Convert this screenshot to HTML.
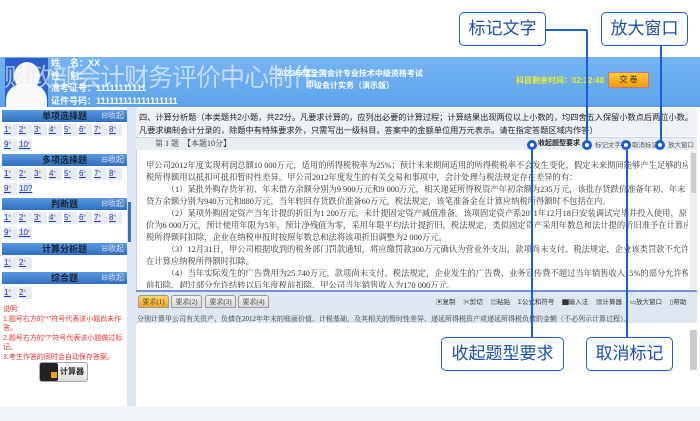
<!DOCTYPE html>
<html><head><meta charset="utf-8"><style>
*{margin:0;padding:0;box-sizing:border-box}
body{width:700px;height:421px;background:#fff;position:relative;overflow:hidden;font-family:"Liberation Sans","Noto Sans CJK SC",sans-serif;}
.a{position:absolute}
.sec{position:absolute;left:2px;width:125px;height:12px;background:linear-gradient(#5c9ae0,#2d6fc0);color:#123;font-size:9px;font-weight:bold;text-align:center;line-height:12px}
.sec span{position:absolute;right:3px;top:0;font-weight:normal;font-size:8px;color:#dde}
.nums{position:absolute;left:4px;font-size:8px;color:#2233bb;width:125px}
.nums b{display:inline-block;width:13px;height:12px;margin-right:2px;background:#e4ecf6;text-decoration:underline;font-weight:normal;line-height:12px}
.nums i{color:#e33;font-style:normal;font-size:6px;vertical-align:top}
.txt{font-family:"Liberation Serif","Noto Serif CJK SC",serif;font-size:8.3px;color:#333;white-space:nowrap;line-height:12px;overflow:hidden}
.call{position:absolute;border:1.5px solid #1a5fd0;border-radius:5px;background:#fff;color:#1a4fb0;font-size:17px;text-align:center;line-height:31px}
.ln{position:absolute;background:#1a5fd0}
.dot{position:absolute;width:10px;height:10px;border:3px solid #1a5fd0;border-radius:50%;background:#fff}
.tab{position:absolute;top:295px;width:31px;height:13px;border:1px solid #999;border-radius:3px 3px 0 0;background:linear-gradient(#f4f4f4,#d8d8d8);font-size:7px;text-align:center;line-height:12px;color:#333;font-family:"Liberation Serif","Noto Serif CJK SC",serif}
</style></head><body>
<div class="a" style="left:0;top:57px;width:700px;height:50px;background:linear-gradient(#75b4f4,#5ea3ea)"></div>
<div class="a" style="left:5px;top:58px;width:43px;height:49px;background:#2a5fd0"></div>
<div class="a" style="left:14px;top:62px;width:26px;height:28px;border-radius:50%;background:#f2f2f2"></div>
<div class="a" style="left:6px;top:84px;width:41px;height:23px;border-radius:16px 16px 0 0;background:#fafafa"></div>
<div class="a" style="left:51px;top:57px;font-size:9px;color:#fff;font-weight:bold;line-height:12.5px;white-space:nowrap">姓&nbsp;&nbsp;&nbsp;&nbsp;名：XX<br>性&nbsp;&nbsp;&nbsp;&nbsp;别：<br>准考证号：11111111111<br>证件号码：111111111111111111</div>
<div class="a" style="left:4px;top:58px;font-size:25px;color:rgba(255,255,255,.6);letter-spacing:-1px;white-space:nowrap">财政部会计财务评价中心制作</div>
<div class="a" style="left:260px;top:68px;width:180px;text-align:center;font-size:8px;color:#fff;font-weight:bold;line-height:12px;white-space:nowrap">2022年度全国会计专业技术中级资格考试<br>中级会计实务（演示版）</div>
<div class="a" style="left:516px;top:75px;font-size:8px;color:#f0f020;font-weight:bold">科目剩余时间：02:32:48</div>
<div class="a" style="left:608px;top:72px;width:41px;height:16px;background:linear-gradient(#ffcc33,#f09a10);border:1px solid #c77;font-size:8px;text-align:center;line-height:14px;color:#222">交 卷</div>
<div class="a" style="left:0;top:107px;width:135px;height:300px;background:#fff"></div>
<div class="a" style="left:127px;top:107px;width:9px;height:300px;background:#dde6f2"></div>
<div class="a" style="left:128px;top:202px;width:3px;height:40px;background:#3a6cc0"></div>
<div class="sec" style="top:110px">单项选择题<span>⊟收起</span></div>
<div class="nums" style="top:124px"><b>1<i>*</i></b><b>2<i>*</i></b><b>3<i>*</i></b><b>4<i>*</i></b><b>5<i>*</i></b><b>6<i>*</i></b><b>7<i>*</i></b><b>8<i>*</i></b><br><b style="margin-top:3px">9<i>*</i></b><b>10<i>*</i></b></div>
<div class="sec" style="top:154px">多项选择题<span>⊟收起</span></div>
<div class="nums" style="top:168px"><b>1<i>*</i></b><b>2<i>*</i></b><b>3<i>*</i></b><b>4<i>*</i></b><b>5<i>*</i></b><b>6<i>*</i></b><b>7<i>*</i></b><b>8<i>*</i></b><br><b style="margin-top:3px">9<i>*</i></b><b>10?</b></div>
<div class="sec" style="top:198px">判断题<span>⊟收起</span></div>
<div class="nums" style="top:212px"><b>1<i>*</i></b><b>2<i>*</i></b><b>3<i>*</i></b><b>4<i>*</i></b><b>5<i>*</i></b><b>6<i>*</i></b><b>7<i>*</i></b><b>8<i>*</i></b><br><b style="margin-top:3px">9<i>*</i></b><b>10<i>*</i></b></div>
<div class="sec" style="top:243px">计算分析题<span>⊟收起</span></div>
<div class="nums" style="top:257px"><b>1<i>*</i></b><b>2<i>*</i></b></div>
<div class="sec" style="top:272px">综合题<span>⊟收起</span></div>
<div class="nums" style="top:287px"><b>1<i>*</i></b><b>2<i>*</i></b></div>
<div class="a" style="left:3px;top:305px;width:122px;font-size:7px;color:#e33;line-height:9.5px">说明:<br>1.题号右方的“*”符号代表该小题尚未作答。<br>2.题号右方的“?”符号代表该小题做过标记。<br>3.考生作答的同时会自动保存答案。</div>
<div class="a" style="left:39px;top:362px;width:49px;height:20px;border:1px solid #aaa;border-radius:3px;background:linear-gradient(#fff,#ddd)"></div>
<div class="a" style="left:40px;top:363px;width:18px;height:18px;background:#222;border-radius:2px"></div>
<div class="a" style="left:51px;top:372px;width:6px;height:6px;background:#f0a020"></div>
<div class="a" style="left:60px;top:366px;font-size:8px;font-weight:bold;color:#222">计算器</div>
<div class="a" style="left:136px;top:107px;width:561px;height:300px;background:#fff;border-left:1px solid #ccd"></div>
<div class="a" style="left:136px;top:108px;width:561px;height:28px;background:#eef1f6"></div>
<div class="a" style="left:139px;top:111px;font-size:8.2px;color:#222;line-height:13px;width:556px">四、计算分析题（本类题共2小题，共22分。凡要求计算的，应列出必要的计算过程；计算结果出现两位以上小数的，均四舍五入保留小数点后两位小数。凡要求编制会计分录的，除题中有特殊要求外，只需写出一级科目。答案中的金额单位用万元表示。请在指定答题区域内作答）</div>
<div class="a" style="left:136px;top:137px;width:561px;height:13px;background:#e8edf4;border-top:1px solid #d0d8e4"></div>
<div class="a txt" style="left:155px;top:138px;font-size:8px">第 1 题　【本题10分】</div>
<div class="a" style="left:538px;top:138px;font-size:7px;color:#222;font-weight:bold">收起题型要求</div>
<div class="a" style="left:595px;top:139px;font-size:6.5px;color:#555">标记文字</div>
<div class="a" style="left:632px;top:139px;font-size:6.5px;color:#555">取消标记</div>
<div class="a" style="left:668px;top:139px;font-size:6.5px;color:#555">放大窗口</div>
<div class="a" style="left:690px;top:151px;width:7px;height:138px;background:#eee"></div>
<div class="a" style="left:691px;top:153px;width:5px;height:40px;background:#ccc"></div>
<div class="a txt" style="left:146px;top:160px;width:542px;height:128px">
甲公司2012年度实现利润总额10 000万元，适用的所得税税率为25%；预计未来期间适用的所得税税率不会发生变化，假定未来期间能够产生足够的应纳<br>
税所得额用以抵扣可抵扣暂时性差异。甲公司2012年度发生的有关交易和事项中，会计处理与税法规定存在差异的有：<br>
　　　（1）某批外购存货年初、年末借方余额分别为9 900万元和9 000万元，相关递延所得税资产年初余额为235万元，该批存货跌价准备年初、年末<br>
贷方余额分别为940万元和880万元，当年转回存货跌价准备60万元，税法规定，该笔准备金在计算应纳税所得额时不包括在内。<br>
　　　（2）某项外购固定资产当年计提的折旧为1 200万元，未计提固定资产减值准备。该项固定资产系2011年12月18日安装调试完毕并投入使用，原<br>
价为6 000万元，预计使用年限为5年，预计净残值为零，采用年限平均法计提折旧，税法规定，类似固定资产采用年数总和法计提的折旧准予在计算应纳<br>
税所得额时扣除，企业在纳税申报时按照年数总和法将该项折旧调整为2 000万元。<br>
　　　（3）12月31日，甲公司根据收到的税务部门罚款通知，将应缴罚款300万元确认为营业外支出，款项尚未支付。税法规定，企业该类罚款不允许<br>
在计算应纳税所得额时扣除。<br>
　　　（4）当年实际发生的广告费用为25 740万元，款项尚未支付。税法规定，企业发生的广告费、业务宣传费不超过当年销售收入15%的部分允许税<br>
前扣除，超过部分允许结转以后年度税前扣除，甲公司当年销售收入为170 000万元。</div>
<div class="a" style="left:136px;top:290px;width:561px;height:2px;background:#7890e0"></div>
<div class="a" style="left:136px;top:292px;width:561px;height:31px;background:#dfe7f3"></div>
<div class="tab" style="left:138px;background:linear-gradient(#ffd966,#f5a623)">要求(1)</div>
<div class="tab" style="left:171px">要求(2)</div>
<div class="tab" style="left:205px">要求(3)</div>
<div class="tab" style="left:238px">要求(4)</div>
<div class="a" style="left:436px;top:296px;font-size:6.5px;color:#333;word-spacing:6px;white-space:nowrap">▣复制 ✂剪切 ▤粘贴 Σ公式和符号 ▇输入法 ▦计算器 ▭放大窗口 ▯帮助</div>
<div class="a txt" style="left:137px;top:313px;font-size:7px;width:555px">分别计算甲公司有关资产、负债在2012年年末的账面价值、计税基础，及其相关的暂时性差异、递延所得税资产或递延所得税负债的金额（不必列示计算过程）。</div>
<div class="a" style="left:136px;top:324px;width:561px;height:82px;background:#fff"></div>
<div class="a" style="left:690px;top:330px;width:7px;height:40px;background:#ccc"></div>
<div class="a" style="left:0;top:406px;width:700px;height:15px;background:#f2f5fa"></div>
<div class="ln" style="left:531px;top:150px;width:1.5px;height:188px"></div>
<div class="ln" style="left:626px;top:150px;width:1.5px;height:188px"></div>
<div class="ln" style="left:586px;top:30px;width:1.5px;height:112px"></div>
<div class="ln" style="left:545px;top:29px;width:42px;height:1.5px"></div>
<div class="ln" style="left:660px;top:45px;width:1.5px;height:97px"></div>
<div class="dot" style="left:527px;top:140px"></div>
<div class="dot" style="left:582px;top:140px"></div>
<div class="dot" style="left:621px;top:140px"></div>
<div class="dot" style="left:655px;top:140px"></div>
<div class="call" style="left:459px;top:12px;width:87px;height:34px">标记文字</div>
<div class="call" style="left:601px;top:12px;width:87px;height:34px">放大窗口</div>
<div class="call" style="left:441px;top:337px;width:123px;height:34px">收起题型要求</div>
<div class="call" style="left:586px;top:337px;width:87px;height:34px">取消标记</div>
</body></html>
